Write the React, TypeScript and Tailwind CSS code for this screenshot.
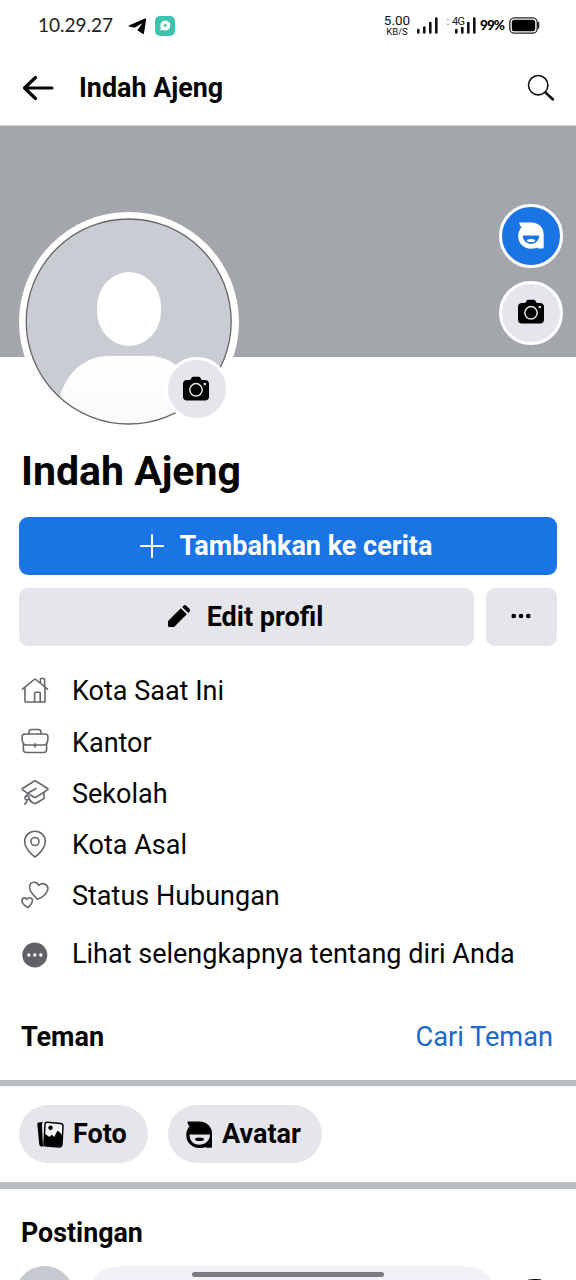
import type { ReactNode } from 'react'

const CameraIcon = () => (
  <svg viewBox="0 0 28 26" className="h-[26px] w-[28px]">
    <path d="M9.3 2.3C9.9 1 10.5.8 11.7.8h4.6c1.200 0 1.800.2 2.400 1.500l.5 1c.3.5.7.7 1.400.7h2.200C25.600 4 27 5.300 27 8v12.500c0 2.700-1.300 4-4 4H5c-2.700 0-4-1.300-4-4V8c0-2.700 1.400-4 4.200-4h2.200c.7 0 1.100-.2 1.400-.7z" />
    <circle cx="14" cy="13.800" r="6.200" fill="none" stroke="#e4e6eb" strokeWidth="1.500" />
    <circle cx="22.800" cy="8" r="1.300" fill="#e4e6eb" />
  </svg>
)

const AvatarIcon = () => (
  <svg viewBox="0 0 26 27" className="h-[27px] w-[26px]" fill="currentColor">
    <path
      fillRule="evenodd"
      d="M1.800.5H13.500C20.500.5 25.700 5.500 25.700 12V25.300c0 .8-.4 1.200-1.200 1.200h-3.700c-.8 0-1.300-.3-1.600-.9-1.800.8-3.700 1.200-6.200 1.200C5.700 26.500.2 21.400.2 14.300.2 10.600 1.500 7.500 3.600 5.300 2.500 4.300 1.600 2.800 1.300 1.300 1.200.8 1.300.5 1.800.5zM4.800 13.500c0 5 3.600 8.300 8.200 8.300s8.200-3.300 8.200-8.300z"
    />
    <ellipse cx="13" cy="18.500" rx="4.200" ry="1.600" />
  </svg>
)

const AvatarChipIcon = () => (
  <svg viewBox="0 0 26 27" className="h-[27px] w-[26px]">
    <path
      fillRule="evenodd"
      d="M2 .5H13.500C20.500.5 26 5.500 26 12.500V26c0 .5-.3.8-.8.8h-4.500c-.7 0-1.100-.2-1.400-.8-1.800.7-3.700 1-6 1C6 27 .2 21.400.2 14.300c0-3.700 1.300-6.800 3.400-9C2.500 4.300 1.700 2.800 1.500 1.300 1.400.8 1.600.5 2 .5zM3.500 13.500c0 6.300 4 10.300 9.700 10.300s10.800-4 10.800-10.300z"
    />
    <ellipse cx="13.500" cy="18.300" rx="4.500" ry="1.800" />
  </svg>
)

const Signal = () => (
  <svg viewBox="0 0 21 17" className="h-[17px] w-[21px]">
    <path d="M1.300 15.500v-2.500M7.300 15.500v-5M13.300 15.500V6M19.300 15.500V1.500" stroke="#111" strokeWidth="2.600" strokeLinecap="round" />
  </svg>
)

const icons: Record<string, ReactNode> = {
  home: (
    <>
      <path d="M1.500 12.200 13.200 2.500q.8-.6 1.600 0L26.500 12.200M4 10.500V24.300q0 .7.700.7H23.300q.7 0 .7-.7V10.500" />
      <path d="M13.600 25V16q0-.8.800-.8h4q.8 0 .8.800v9M19.400 6V2.200q0-.7.700-.7h2.800q.7 0 .7.700v7.500" />
    </>
  ),
  work: (
    <>
      <path d="M4 6h20q3 0 3 3c0 6-2 8-4 8H5c-2 0-4-2-4-8q0-3 3-3z" />
      <path d="M8 6V4.500Q8 1.500 10.500 1.500h7Q20 1.500 20 4.500V6M2.400 16v5.500Q2.400 24.500 5.400 24.500h17.200q3 0 3-3V16M14 15.800v3.200" />
    </>
  ),
  school: (
    <>
      <path d="M1.500 9.500 13 2.200q1-.6 2 0L26.600 9.500q.8.700 0 1.400L15 18.200q-1 .6-2 0L1.500 10.900q-.8-.7 0-1.400z" />
      <path d="M15 9.500 7.500 13.700Q5.500 15 5.700 17.500M23 13.500v6L15.500 24q-1.500.8-3 0L9 22" />
      <circle cx="6" cy="18.700" r="2" />
      <path d="M6 20.700Q6 23.500 3.800 25M7.800 19.500l2.500 3" />
    </>
  ),
  pin: (
    <>
      <path d="M14 27C11.500 25.300 3.700 18.500 3.700 11.500 3.700 5.500 8.200 1.300 14 1.300s10.300 4.200 10.300 10.200C24.300 18.500 16.500 25.300 14 27z" />
      <circle cx="14" cy="11.500" r="4" />
    </>
  ),
  hearts: (
    <>
      <path d="M16.500 18.300C13 15 8.600 10.500 8.600 6.500 8.600 3.200 10.500 1.300 13.200 1.300c2.300 0 3.700 1.200 4.600 3 1.500-1.400 3.700-2.200 5.900-1.200 2.600 1.200 3.800 3.700 2.700 6.600-1.300 3.500-6 7-9.900 8.600z" />
      <path d="M7 26.500C4.500 25 .9 23 .9 19.900c0-1.800 1-3 2.600-3 1.100 0 1.900.4 2.500 1.400.5-1 1.500-1.700 2.800-1.600 1.800.1 2.800 1.600 2.600 3.300-.3 2.800-2.500 5-4.400 6.500z" />
    </>
  ),
}

const details = [
  { icon: 'home', label: 'Kota Saat Ini' },
  { icon: 'work', label: 'Kantor' },
  { icon: 'school', label: 'Sekolah' },
  { icon: 'pin', label: 'Kota Asal' },
  { icon: 'hearts', label: 'Status Hubungan' },
]

export default function App() {
  return (
    <div className="flex h-[1280px] w-[576px] flex-col overflow-hidden bg-white font-['Roboto',sans-serif] text-[27px] text-[#050505]">

      {/* status bar */}
      <div className="flex h-[51px] shrink-0 items-center pl-[38px] pr-9 text-black">
        <span className="w-[90px] font-['Lato',sans-serif] text-[19px] text-[#222]">10.29.27</span>
        <svg viewBox="0 0 19 17" className="mt-px h-[17px] w-[19px]">
          <path d="M.8 7.500 17 .6q1.200-.4 1.100.8L16 15.300q-.2 1.300-1.400.5L9.300 12.300 14.500 5 6.500 9.800 1 8.600Q.2 8 .8 7.500z" />
        </svg>
        <svg viewBox="0 0 20 20" className="ml-2 h-5 w-5">
          <rect width="20" height="20" rx="5" fill="#3dc2ad" />
          <path d="M4.500 15 6 12A5 5 0 1 1 9 14.300L7 13.800z" fill="#fff" />
          <circle cx="10.200" cy="9.400" r="1.700" fill="#64cbbb" />
        </svg>
        <div className="ml-auto flex items-center">
          <div className="mr-[2px] flex w-[30px] flex-col items-center gap-px text-[#111]">
            <span className="text-[13.500px] leading-[11px]">5.00</span>
            <span className="text-[9.500px] leading-[9px]">KB/S</span>
          </div>
          <div className="ml-[3px]"><Signal /></div>
          <div className="relative ml-[17px]">
            <Signal />
            <span className="absolute -left-[4px] -top-[1px] bg-white px-px text-[11px] leading-[11px] tracking-[-0.600px] text-[#222]">4G</span>
            <svg viewBox="0 0 4 8" className="absolute -left-[9px] top-[1px] h-2 w-1" fill="none" stroke="#aaa">
              <path d="M.5 2.500 2 1l1.500 1.500M.5 5.500 2 7l1.500-1.500" />
            </svg>
          </div>
          <span className="ml-[4px] w-[26px] pb-px font-['Lato',sans-serif] text-[13.500px] font-black tracking-[-0.900px]">99%</span>
          <svg viewBox="0 0 31 17" className="ml-[3px] h-[17px] w-[31px]">
            <rect x=".8" y=".8" width="27.400" height="15.400" rx="4.500" fill="none" stroke="#222" strokeWidth="1.300" />
            <rect x="2.800" y="2.800" width="23.400" height="11.400" rx="2.500" />
            <path d="M29.500 5.500v5.500" stroke="#222" strokeWidth="1.500" strokeLinecap="round" />
          </svg>
        </div>
      </div>

      {/* header */}
      <header className="flex h-[75px] shrink-0 items-center border-b border-[#c9ccd1] pl-[22px] pr-[21px]">
        <svg viewBox="0 0 32 26" className="h-[26px] w-8" fill="none" stroke="#050505" strokeWidth="3.200" strokeLinecap="round" strokeLinejoin="round">
          <path d="M30 13H2.500M13.500 2.500 2.500 13l11 10.500" />
        </svg>
        <h1 className="ml-[25px] pt-px text-[26.900px] font-bold">Indah Ajeng</h1>
        <svg viewBox="0 0 28 28" className="ml-auto h-7 w-7" fill="none" stroke="#111" strokeLinecap="round">
          <circle cx="11.200" cy="11.200" r="9.700" strokeWidth="1.600" />
          <path d="m18.500 18.500 7.500 7" strokeWidth="2.500" />
        </svg>
      </header>

      {/* cover */}
      <div className="relative flex h-[231px] shrink-0 flex-col items-end gap-[13px] bg-[#a3a7ab] pr-[13px] pt-[78px]">
        <div className="flex h-16 w-16 items-center justify-center rounded-full border-3 border-white bg-[#1b74e4] pb-[2px] text-white"><AvatarIcon /></div>
        <div className="flex h-16 w-16 items-center justify-center rounded-full border-3 border-white bg-[#e4e6eb] pb-[3px]"><CameraIcon /></div>
        <div className="absolute left-[19px] top-[86px] h-[220px] w-[220px] rounded-full bg-white">
          <svg viewBox="0 0 220 220" className="h-full w-full">
            <defs>
              <clipPath id="face"><circle cx="109.700" cy="109.500" r="102.500" /></clipPath>
              <linearGradient id="shirt" x1="0" y1="0" x2="0" y2="1">
                <stop stopColor="#fff" />
                <stop offset="1" stopColor="#f8f9fa" />
              </linearGradient>
            </defs>
            <g clipPath="url(#face)">
              <rect width="220" height="220" fill="#c9ccd3" />
              <rect x="78" y="60" width="64" height="74" rx="32" ry="35" fill="#fff" />
              <path d="M38 220C34 170 60 144 90 144h40c30 0 52 28 52 76z" fill="url(#shirt)" />
            </g>
            <circle cx="109.700" cy="109.500" r="102.500" fill="none" stroke="#666" strokeWidth="1.300" />
          </svg>
          <div className="absolute left-[146px] top-[145px] flex h-[64px] w-[64px] items-center justify-center rounded-full border-3 border-white bg-[#e4e6eb] pr-[2px]"><CameraIcon /></div>
        </div>
      </div>

      {/* name and actions */}
      <section className="flex flex-col px-[19px] pt-[86px]">
        <h2 className="pl-[2px] text-[41px] font-bold leading-[56px]">Indah Ajeng</h2>
        <button className="mt-[18px] flex h-[58px] items-center justify-center rounded-[9px] bg-[#1b74e4] pr-[4px] font-bold text-white">
          <svg viewBox="0 0 24 24" className="mr-4 h-6 w-6" stroke="#fff" strokeWidth="2" strokeLinecap="round">
            <path d="M12 1v22M1 12h22" />
          </svg>
          Tambahkan ke cerita
        </button>
        <div className="mt-[13px] flex gap-3">
          <button className="flex h-[58px] w-[455px] items-center justify-center rounded-[9px] bg-[#e4e6eb] pr-[3px] font-bold">
            <svg viewBox="0 0 24 24" className="mb-[3px] mr-[16px] h-6 w-6">
              <path d="M1.500 16.500 13.800 4.300l6 6L7.500 22.500q-.6.500-1.500.5H2.500Q1 23 1 21.500V18q0-.9.500-1.500zM15.200 3l1.300-1.300q1.200-1.200 2.600-.2l3.500 3.500q1.100 1.400 0 2.600l-1.300 1.300z" />
            </svg>
            Edit profil
          </button>
          <button className="flex h-[58px] flex-1 items-center justify-center rounded-[9px] bg-[#e4e6eb] pb-[2px] pr-[2px]">
            <svg viewBox="0 0 20 6" className="h-[6px] w-5">
              <circle cx="2.700" cy="3" r="2.300" />
              <circle cx="10" cy="3" r="2.300" />
              <circle cx="17.300" cy="3" r="2.300" />
            </svg>
          </button>
        </div>
      </section>

      {/* details */}
      <ul className="flex flex-col pl-[21px] pt-[20px]">
        {details.map((item) => (
          <li key={item.icon} className="flex h-[51.200px] items-center">
            <svg viewBox="0 0 28 28" className="mb-[2px] mr-[23px] h-7 w-7" fill="none" stroke="#65676b" strokeWidth="1.600" strokeLinecap="round" strokeLinejoin="round">
              {icons[item.icon]}
            </svg>
            {item.label}
          </li>
        ))}
        <li className="mt-[2px] flex h-[60px] items-center">
          <svg viewBox="0 0 28 28" className="mr-[23px] mt-[3px] h-7 w-7">
            <circle cx="13.800" cy="14" r="12.500" fill="#606266" />
            <g fill="#fff">
              <circle cx="7.800" cy="14" r="1.700" />
              <circle cx="13.800" cy="14" r="1.700" />
              <circle cx="19.800" cy="14" r="1.700" />
            </g>
          </svg>
          Lihat selengkapnya tentang diri Anda
        </li>
      </ul>

      {/* friends */}
      <div className="flex h-[96px] shrink-0 items-center justify-between pl-[21px] pr-[23px] pt-[10px]">
        <h3 className="font-bold">Teman</h3>
        <a className="text-[27.200px] text-[#1d68c9]">Cari Teman</a>
      </div>

      <div className="h-[6px] shrink-0 bg-[#babdbf]" />

      <div className="flex h-[96px] shrink-0 items-center gap-5 px-[19px] font-bold">
        <button className="flex h-[58px] w-[129px] items-center rounded-full bg-[#e4e6eb] pl-[18px] pt-px">
          <svg viewBox="0 0 27 27" className="mr-[9px] h-[27px] w-[27px]">
            <path d="M.3 2.800Q.2 1.700 1.500 1.500L6 1Q4.600 2 5 5l.8 17q.1 2.500 1.200 3.500H4.500Q2.500 25.500 2.200 23z" />
            <path d="M10.500 1.200 23.500 2.400q2.600.3 2.500 2.800L25 23.500q-.2 2.500-2.700 2.400L9.200 25q-2.300-.2-2.200-2.500L8 3.500Q8.200 1 10.500 1.200z" fill="#f3f4f6" stroke="#050505" strokeWidth="1.500" />
            <circle cx="13.500" cy="6.800" r="2.200" />
            <path d="M7.500 13q2 .5 3.500 2 1.500 1.500 2.500 0 1.500-1.800 2.700 0l1 1 2.500-5q1.300-1.800 2.700 0l3 3.500L24.800 23q-.2 2.500-2.500 2.300L9 24.700q-2-.2-2-2.200z" />
          </svg>
          Foto
        </button>
        <button className="flex h-[58px] w-[154px] items-center rounded-full bg-[#e4e6eb] pl-[18px] pt-px">
          <span className="mr-[10px]"><AvatarChipIcon /></span>
          Avatar
        </button>
      </div>

      <div className="h-[7px] shrink-0 bg-[#babdbf]" />

      {/* posts */}
      <section className="relative flex h-[91px] shrink-0 flex-col overflow-hidden">
        <h3 className="pl-[21px] pt-[24px] text-[26.800px] font-bold leading-[40px]">Postingan</h3>
        <div className="mt-[13px] flex shrink-0 items-start pl-[15px]">
          <div className="h-[59px] w-[59px] rounded-full bg-[#c6cad0]" />
          <div className="ml-[14px] h-[62px] w-[408px] rounded-full bg-[#f0f2f5]" />
          <svg viewBox="0 0 28 28" className="ml-[24px] mt-[12px] h-7 w-7">
            <path d="M4 6q1-3.500 5-4.500 5-1 11-.2 3 .7 4 4.200V27H4z" />
          </svg>
        </div>
        <div className="absolute left-48 top-[83px] h-[5px] w-48 rounded-full bg-[#7a7c81]" />
      </section>
    </div>
  )
}
